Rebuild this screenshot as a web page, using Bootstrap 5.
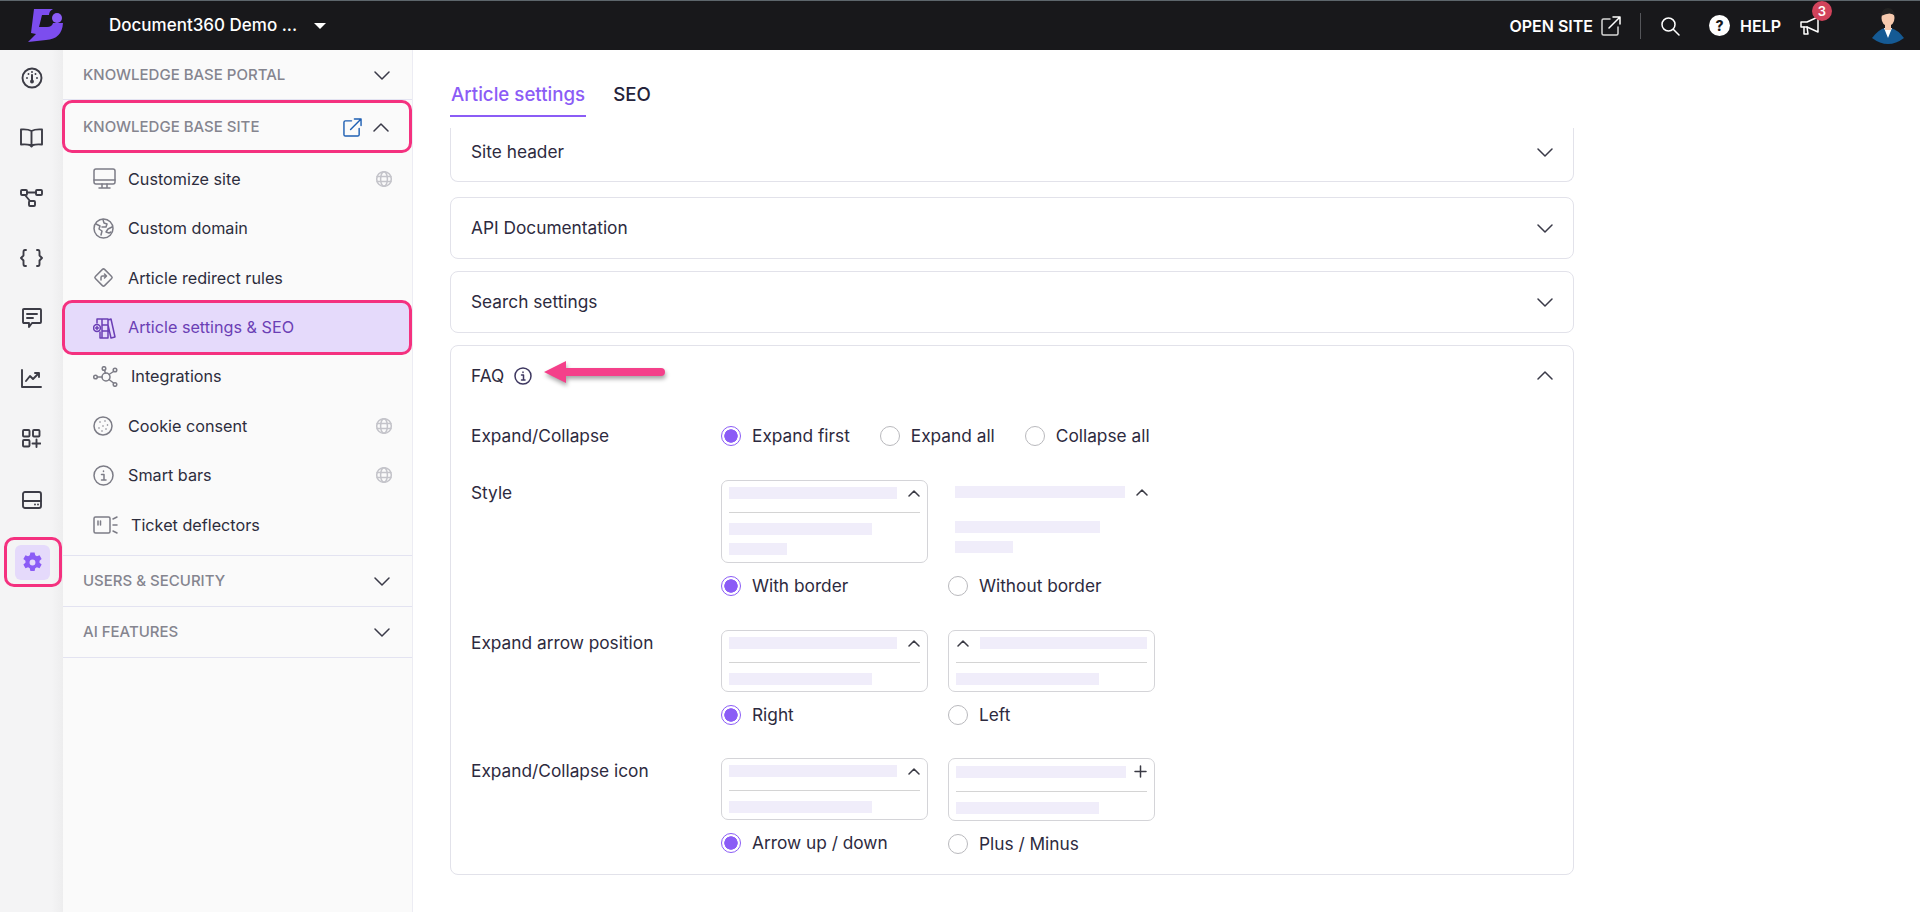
<!DOCTYPE html>
<html lang="en">
<head>
<meta charset="utf-8">
<title>Article settings &amp; SEO</title>
<link href="https://cdn.jsdelivr.net/npm/bootstrap@5.3.0/dist/css/bootstrap.min.css" rel="stylesheet">
<style>
html,body{height:100%;overflow:hidden}
body{font-family:Inter,"Liberation Sans",sans-serif;font-size:17.3px;color:#2d2a3e;background:#fff}
svg{display:block;flex:none}
.ic{fill:none;stroke:currentColor;stroke-width:1.5;stroke-linecap:round;stroke-linejoin:round}
.topbar{height:50px;background:#18181b;border-top:1px solid #5d666c;color:#fff;flex:none}
.brand-slot{width:109px;padding-left:28px}
.proj{font-size:17px;font-weight:500;width:192px;white-space:nowrap}
.caret-d{width:0;height:0;border-left:6px solid transparent;border-right:6px solid transparent;border-top:6px solid #fff;margin-left:13px}
.top-link{font-size:16px;font-weight:600;white-space:nowrap}
.top-sep{width:1px;height:26px;background:#55565a;margin:0 15px 0 19px}
.help-dot{width:21px;height:21px;border-radius:50%;background:#fff;color:#18181b;font-size:14px;font-weight:800;line-height:21px;text-align:center;margin:0 10px 0 29px}
.mega{position:relative;margin:0 50px 0 18px}
.mega-badge{position:absolute;top:-14px;left:13px;width:20px;height:20px;border-radius:50%;background:#d1435b;color:#fff;font-size:13px;font-weight:600;line-height:20px;text-align:center}
.avatar-slot{margin-right:15px}
.shell{height:862px}
.rail{width:63px;background:linear-gradient(90deg,#f4f4f5 82%,#ededee);color:#3c3c46;flex:none}
.rail .ic{stroke-width:1.900}
.rail-item{height:56px;margin-bottom:4px}
.rail-low{margin-top:2px}
.rail-active{width:58px;height:50px;margin:5px 0 7px 2px;border:3px solid #f4317f;border-radius:10px}
.gear-bg{width:35px;height:35px;border-radius:6px;background:#e5dafb;color:#8b5cf6}
.side{width:350px;background:#fafafa;border-right:1px solid #ececf3;flex:none}
.sec{height:51px;padding:2px 22px 0 20px;border-bottom:1px solid #e3e3f1;font-size:15px;font-weight:500;color:#85858f}
.sec-first{height:50px}
.sec-open{height:53px;margin-left:-1px;padding-left:18px;padding-right:20px;border:3px solid #f4317f;border-radius:10px}
.chev{color:#3a3a48}
.ext{color:#1e5fb3;margin-right:11px}
.sub-list{padding-top:1px;padding-bottom:5px;border-bottom:1px solid #e3e3f1}
.sub{height:49.5px;padding:0 20px 0 30px;color:#2d2d3d;font-size:16.2px}
.sub-ic{width:24px;margin-right:11px;color:#7c7c86;flex:none}
.sub-ic-w{width:27px}
.globe{margin-left:auto;color:#c4c4ca}
.sub-on{height:55px;margin:-3px 0 -3px -1px;padding-left:28px;padding-top:1px;border:3px solid #f4317f;border-radius:10px;background:#e5dafb;color:#6b3fb5}
.sub-on .sub-ic{color:#6b3fb5}
.stage{padding-left:37px;min-width:0}
.tabs-row{padding-top:34px;gap:26px}
.tab-lnk{display:block;font-size:18.7px;font-weight:500;line-height:22px;padding:0 1px 9px;color:#25233a;text-decoration:none;border-bottom:2px solid transparent}
.tab-on{color:#8b5cf6;border-bottom-color:#8b5cf6}
.pane{width:1124px;padding-top:11px}
.acc{border:1px solid #e2e2ea;border-radius:8px;margin-bottom:12px;background:#fff}
.acc-head{height:60px;padding:0 20px}
.acc-cut{border-top:0;border-top-left-radius:0;border-top-right-radius:0;margin-bottom:15px}
.acc-cut .acc-head{height:53px;padding-bottom:5px}
.faq-head{position:relative;height:59px}
.info{margin-left:10px;color:#3d3760}
.arrow-note{position:absolute;left:92px;top:14px;filter:drop-shadow(1px 3px 2px rgba(0,0,0,.35))}
.faq-body{padding:19px 20px 18px}
.opt-row{margin-bottom:32px}
.opt-row:last-child{margin-bottom:0}
.opt-row-tight{margin-bottom:31px}
.opt-name{width:250px;line-height:24px;padding-top:1px;flex:none;color:#2d2a3e}
.opt-name-first{padding-top:0}
.opts{gap:20px}
.opt-col{width:207px}
.radio-line{height:24px;margin-top:11px}
.radio-line-top{height:24px;margin-top:0}
.rad{width:20px;height:20px;margin:0 11px 0 0;flex:none;border:1px solid #b9b9bd;background-color:#fff}
.rad:checked{background-color:#fff;border-color:#8b5cf6;background-image:radial-gradient(circle,#8b5cf6 0 6.4px,#fff 7px)}
.rad:focus{box-shadow:none;border-color:#b9b9bd}
.rad-lbl{white-space:nowrap;color:#2d2a3e}
.first-gap{margin-right:30px}
.prev{border:1px solid #d4d4d8;border-radius:7px;padding:6px 7px;color:#3a3a44}
.prev-tall{padding-bottom:7px}
.prev-plain{border-color:transparent;padding:5px 6px 9px}
.bar1,.bar1w,.bar2,.bar2w,.bar3{height:12px;background:#f0edfa}
.bar1{width:168px}.bar1w{width:170px}.bar2{width:143px}.bar2w{width:145px}.bar3{width:58px;margin-top:8px}
.prev-line{height:1px;background:#d4d4d4;margin:13px 0 10px}
.prev-plain .prev-line{background:transparent;margin:12px 0 10px}
.chev-sm-l{margin:0 11px 0 1px}
</style>
</head>
<body class="d-flex flex-column">
<header class="topbar d-flex align-items-center">
  <div class="brand-slot">
    <svg width="36" height="34" viewBox="0 0 36 34"><path d="M6 0H25Q21 2 21 6H14L11 18H19Q24 18 25 14H35Q34 30 18 31L0 33 8 25 3 24Z" fill="#7c4dee"/><circle cx="29" cy="9" r="5" fill="#8b5cf6"/></svg>
  </div>
  <div class="proj">Document360 Demo ...</div>
  <span class="caret-d"></span>
  <div class="ms-auto d-flex align-items-center">
    <span class="top-link">OPEN SITE</span>
    <svg class="ic ms-2" style="color:#d6d6d6" width="20" height="20" viewBox="0 0 20 20"><path d="M9 3H2.500A1.500 1.500 0 0 0 1 4.500V17.500A1.500 1.500 0 0 0 2.500 19H15.500A1.500 1.500 0 0 0 17 17.500V11"/><path d="M8 12 19 1M12 1H19V8" stroke="#fff"/></svg>
    <span class="top-sep"></span>
    <svg class="ic ms-1" width="20" height="20" viewBox="0 0 20 20"><circle cx="8.500" cy="8.500" r="6.500"/><path d="M13.500 13.500 19 19"/></svg>
    <span class="help-dot">?</span>
    <span class="top-link">HELP</span>
    <span class="mega">
      <svg class="ic" width="22" height="22" viewBox="0 0 22 22" stroke-width="2"><path d="M2 7H8L19 2V17L8 12H2Z"/><path d="M5 12V19H9L8 12"/></svg>
      <span class="mega-badge">3</span>
    </span>
    <svg class="avatar-slot" width="34" height="36" viewBox="0 0 34 36"><path d="M1 30Q8 21 14 20H20Q27 22 33 30Q25 36 17 36T1 30Z" fill="#155a94"/><path d="M13 20 17 30 21 20Z" fill="#fff"/><ellipse cx="17" cy="10" rx="6.500" ry="8" fill="#f6c9ae"/><path d="M10 8Q11 0 17 0T24 8Q20 3 10 8Z" fill="#222"/><rect x="14" y="15" width="6" height="7" fill="#f6c9ae"/></svg>
  </div>
</header>
<div class="shell d-flex">
  <nav class="rail d-flex flex-column align-items-center">
    <div class="rail-item d-flex align-items-center justify-content-center"><svg class="ic" width="22" height="22" viewBox="0 0 22 22"><circle cx="11" cy="11" r="9.500"/><path d="M11 8V14" stroke-width="2"/><circle cx="11" cy="14.500" r="1" fill="currentColor"/><path d="M6 11v.01M7.500 7v.01M14.500 7v.01M16 11v.01M11 5v.01"/></svg></div>
    <div class="rail-item d-flex align-items-center justify-content-center"><svg class="ic" width="23" height="20" viewBox="0 0 23 20"><path d="M11.500 3Q8 1 1 1.500V16.500Q7 16 10 17L11.500 18.500 13 17Q16 16 22 16.500V1.500Q15 1 11.500 3ZM11.500 3V17"/></svg></div>
    <div class="rail-item d-flex align-items-center justify-content-center"><svg class="ic" width="23" height="18" viewBox="0 0 23 18"><rect x="1" y="1" width="6" height="5" rx="1"/><rect x="16" y="1" width="6" height="5" rx="1"/><rect x="9" y="12" width="6" height="5" rx="1"/><path d="M7 3.500H16M5 6 10 12"/></svg></div>
    <div class="rail-item d-flex align-items-center justify-content-center"><svg class="ic" width="23" height="18" viewBox="0 0 23 18"><path d="M6 1H5Q3.500 1 3.500 3V6.500L1 9 3.500 11.500V15Q3.500 17 5 17H6M17 1H18Q19.500 1 19.500 3V6.500L22 9 19.500 11.500V15Q19.500 17 18 17H17"/></svg></div>
    <div class="rail-item d-flex align-items-center justify-content-center"><svg class="ic" width="20" height="20" viewBox="0 0 20 20"><path d="M2 1H18Q19 1 19 2V14Q19 15 18 15H10L7 19V15H2Q1 15 1 14V2Q1 1 2 1Z"/><path d="M5 6H15M5 10H11"/></svg></div>
    <div class="rail-item d-flex align-items-center justify-content-center"><svg class="ic" width="21" height="19" viewBox="0 0 21 19"><path d="M1 1V18H20"/><path d="M5 12 9 7 12 10 18 4M14 4H18V8"/></svg></div>
    <div class="rail-item d-flex align-items-center justify-content-center"><svg class="ic" width="19" height="19" viewBox="0 0 19 19"><rect x="1" y="1" width="6.500" height="6.500" rx="1"/><rect x="11" y="1" width="6.500" height="6.500" rx="1"/><rect x="1" y="11" width="6.500" height="6.500" rx="1"/><path d="M14.500 10.500V18M10.500 14.500H18.500"/></svg></div>
    <div class="rail-item rail-low d-flex align-items-center justify-content-center"><svg class="ic" width="20" height="18" viewBox="0 0 20 18"><rect x="1" y="1" width="18" height="16" rx="2"/><path d="M1 10H19M13 13.500h.01M16 13.500h.01"/></svg></div>
    <div class="rail-active d-flex align-items-center justify-content-center">
      <div class="gear-bg d-flex align-items-center justify-content-center"><svg width="21" height="21" viewBox="0 0 20 20"><path fill="currentColor" fill-rule="evenodd" d="M8 .5h4l.6 2.600 1.600.9 2.500-.8 2 3.400-2 1.800v1.800l2 1.800-2 3.400-2.500-.8-1.600.9-.6 2.600H8l-.6-2.600-1.600-.9-2.500.8-2-3.400 2-1.800V8.400l-2-1.800 2-3.400 2.500.8 1.600-.9ZM10 7.200a2.800 2.800 0 1 0 0 5.600 2.800 2.800 0 0 0 0-5.600Z"/></svg></div>
    </div>
  </nav>
  <aside class="side d-flex flex-column">
    <div class="sec sec-first d-flex align-items-center justify-content-between"><span>KNOWLEDGE BASE PORTAL</span><svg class="ic chev" width="16" height="9" viewBox="0 0 16 9"><path d="M1 1 8 8 15 1"/></svg></div>
    <div class="sec sec-open d-flex align-items-center"><span class="me-auto">KNOWLEDGE BASE SITE</span>
      <svg class="ic ext" width="19" height="19" viewBox="0 0 20 20" stroke-width="1.700"><path d="M9 3H2.500A1.500 1.500 0 0 0 1 4.500V17.500A1.500 1.500 0 0 0 2.500 19H15.500A1.500 1.500 0 0 0 17 17.500V11M8 12 19 1M12 1H19V8"/></svg>
      <svg class="ic chev" width="16" height="9" viewBox="0 0 16 9"><path d="M1 8 8 1 15 8"/></svg></div>
    <div class="sub-list d-flex flex-column">
      <div class="sub d-flex align-items-center"><span class="sub-ic"><svg class="ic" width="23" height="21" viewBox="0 0 23 21"><rect x="1" y="1" width="21" height="15" rx="2"/><path d="M1 12H22M9 16V19M14 16V19M6 20H17"/></svg></span>Customize site<svg class="ic globe" width="16" height="16" viewBox="0 0 16 16" stroke-width="1.200"><circle cx="8" cy="8" r="7.300"/><ellipse cx="8" cy="8" rx="3.400" ry="7.300"/><path d="M1 5.500H15M1 10.500H15"/></svg></div>
      <div class="sub d-flex align-items-center"><span class="sub-ic"><svg class="ic" width="21" height="21" viewBox="0 0 21 21" stroke-width="1.300"><circle cx="10.500" cy="10.500" r="9.500"/><path d="M3 6 7 8 6 11 9 13 8 17M10 1.500 11 5 14 6 13 9 9 9M19 9 15 11 13 14 16 15 18 14"/></svg></span>Custom domain</div>
      <div class="sub d-flex align-items-center"><span class="sub-ic"><svg class="ic" width="21" height="21" viewBox="0 0 21 21" stroke-width="1.300"><rect x="4" y="4" width="13" height="13" rx="1.500" transform="rotate(45 10.500 10.500)"/><path d="M8 13V10.500Q8 9 9.500 9H13M11.500 7 13.500 9 11.500 11"/></svg></span>Article redirect rules</div>
      <div class="sub sub-on d-flex align-items-center"><span class="sub-ic"><svg class="ic" width="23" height="22" viewBox="0 0 23 22" stroke-width="1.300"><path d="M4 6V2H15V21H7V15M9 2V21M9 8H15M9 14H15M15 3 18 2 22 20 18 21 15 8"/><circle cx="4" cy="11" r="3.400"/><path d="M4 9.500V12.500M2.500 11H5.500"/></svg></span>Article settings &amp; SEO</div>
      <div class="sub d-flex align-items-center"><span class="sub-ic sub-ic-w"><svg class="ic" width="25" height="21" viewBox="0 0 25 21" stroke-width="1.300"><circle cx="13" cy="11" r="4"/><circle cx="2.500" cy="11" r="1.800"/><circle cx="11" cy="2.500" r="1.800"/><circle cx="22" cy="4" r="1.800"/><circle cx="22" cy="18.500" r="1.800"/><path d="M4.500 11H9M11.500 4.500 12.500 7M20.500 5.500 16 8.500M20.500 17 16 13.500"/></svg></span>Integrations</div>
      <div class="sub d-flex align-items-center"><span class="sub-ic"><svg class="ic" width="20" height="20" viewBox="0 0 20 20" stroke-width="1.300"><circle cx="10" cy="10" r="9"/><path d="M7 6v.01M12 5v.01M14.500 9v.01M10 10v.01M6 12v.01M13 13v.01M9 15v.01" stroke-width="1.600"/></svg></span>Cookie consent<svg class="ic globe" width="16" height="16" viewBox="0 0 16 16" stroke-width="1.200"><circle cx="8" cy="8" r="7.300"/><ellipse cx="8" cy="8" rx="3.400" ry="7.300"/><path d="M1 5.500H15M1 10.500H15"/></svg></div>
      <div class="sub d-flex align-items-center"><span class="sub-ic"><svg class="ic" width="21" height="21" viewBox="0 0 21 21" stroke-width="1.300"><circle cx="10.500" cy="10.500" r="9.500"/><path d="M10.500 6v.5M8.500 9.500H11V15M8.500 15H13"/></svg></span>Smart bars<svg class="ic globe" width="16" height="16" viewBox="0 0 16 16" stroke-width="1.200"><circle cx="8" cy="8" r="7.300"/><ellipse cx="8" cy="8" rx="3.400" ry="7.300"/><path d="M1 5.500H15M1 10.500H15"/></svg></div>
      <div class="sub d-flex align-items-center"><span class="sub-ic sub-ic-w"><svg class="ic" width="25" height="18" viewBox="0 0 25 18" stroke-width="1.200"><rect x="1" y="1" width="16" height="16" rx="1.500"/><path d="M5 5V9M7.500 5V9M20 3 24 1M20 9H24M20 15 24 17"/></svg></span>Ticket deflectors</div>
    </div>
    <div class="sec d-flex align-items-center justify-content-between"><span>USERS &amp; SECURITY</span><svg class="ic chev" width="16" height="9" viewBox="0 0 16 9"><path d="M1 1 8 8 15 1"/></svg></div>
    <div class="sec d-flex align-items-center justify-content-between"><span>AI FEATURES</span><svg class="ic chev" width="16" height="9" viewBox="0 0 16 9"><path d="M1 1 8 8 15 1"/></svg></div>
  </aside>
  <main class="stage flex-grow-1">
    <div class="tabs-row d-flex">
      <a class="tab-lnk tab-on" href="#">Article settings</a>
      <a class="tab-lnk" href="#">SEO</a>
    </div>
    <div class="pane">
      <div class="acc acc-cut"><div class="acc-head d-flex align-items-center justify-content-between"><span>Site header</span><svg class="ic chev" width="16" height="9" viewBox="0 0 16 9"><path d="M1 1 8 8 15 1"/></svg></div></div>
      <div class="acc"><div class="acc-head d-flex align-items-center justify-content-between"><span>API Documentation</span><svg class="ic chev" width="16" height="9" viewBox="0 0 16 9"><path d="M1 1 8 8 15 1"/></svg></div></div>
      <div class="acc"><div class="acc-head d-flex align-items-center justify-content-between"><span>Search settings</span><svg class="ic chev" width="16" height="9" viewBox="0 0 16 9"><path d="M1 1 8 8 15 1"/></svg></div></div>
      <div class="acc mb-0">
        <div class="acc-head faq-head d-flex align-items-center">
          <span>FAQ</span>
          <svg class="ic info" width="18" height="18" viewBox="0 0 18 18" stroke-width="1.100"><circle cx="9" cy="9" r="8"/><path d="M9 5v.5M7.500 8H9.500V13M7.500 13H11"/></svg>
          <svg class="arrow-note" width="122" height="24" viewBox="0 0 122 24"><path d="M1 12 23 1V8H118A4 4 0 0 1 118 16H23V23Z" fill="#f4408a"/></svg>
          <svg class="ic chev ms-auto" width="16" height="9" viewBox="0 0 16 9"><path d="M1 8 8 1 15 8"/></svg>
        </div>
        <div class="faq-body">
          <div class="opt-row d-flex">
            <div class="opt-name opt-name-first">Expand/Collapse</div>
            <div class="radio-line-top d-flex align-items-center">
              <input class="form-check-input rad" type="radio" name="a" checked><span class="rad-lbl first-gap">Expand first</span>
              <input class="form-check-input rad" type="radio" name="a"><span class="rad-lbl first-gap">Expand all</span>
              <input class="form-check-input rad" type="radio" name="a"><span class="rad-lbl">Collapse all</span>
            </div>
          </div>
          <div class="opt-row d-flex">
            <div class="opt-name">Style</div>
            <div class="opts d-flex">
              <div class="opt-col">
                <div class="prev prev-tall">
                  <div class="d-flex align-items-center justify-content-between"><div class="bar1"></div><svg class="ic" width="12" height="8" viewBox="0 0 12 8" stroke-width="1.700"><path d="M1 7 6 2 11 7"/></svg></div>
                  <div class="prev-line"></div><div class="bar2"></div><div class="bar3"></div>
                </div>
                <div class="radio-line d-flex align-items-center"><input class="form-check-input rad" type="radio" name="b" checked><span class="rad-lbl">With border</span></div>
              </div>
              <div class="opt-col">
                <div class="prev prev-plain">
                  <div class="d-flex align-items-center justify-content-between"><div class="bar1w"></div><svg class="ic" width="12" height="8" viewBox="0 0 12 8" stroke-width="1.700"><path d="M1 7 6 2 11 7"/></svg></div>
                  <div class="prev-line"></div><div class="bar2w"></div><div class="bar3"></div>
                </div>
                <div class="radio-line d-flex align-items-center"><input class="form-check-input rad" type="radio" name="b"><span class="rad-lbl">Without border</span></div>
              </div>
            </div>
          </div>
          <div class="opt-row opt-row-tight d-flex">
            <div class="opt-name">Expand arrow position</div>
            <div class="opts d-flex">
              <div class="opt-col">
                <div class="prev">
                  <div class="d-flex align-items-center justify-content-between"><div class="bar1"></div><svg class="ic" width="12" height="8" viewBox="0 0 12 8" stroke-width="1.700"><path d="M1 7 6 2 11 7"/></svg></div>
                  <div class="prev-line"></div><div class="bar2"></div>
                </div>
                <div class="radio-line d-flex align-items-center"><input class="form-check-input rad" type="radio" name="c" checked><span class="rad-lbl">Right</span></div>
              </div>
              <div class="opt-col">
                <div class="prev">
                  <div class="d-flex align-items-center"><svg class="ic chev-sm-l" width="12" height="8" viewBox="0 0 12 8" stroke-width="1.700"><path d="M1 7 6 2 11 7"/></svg><div class="bar1"></div></div>
                  <div class="prev-line"></div><div class="bar2"></div>
                </div>
                <div class="radio-line d-flex align-items-center"><input class="form-check-input rad" type="radio" name="c"><span class="rad-lbl">Left</span></div>
              </div>
            </div>
          </div>
          <div class="opt-row d-flex">
            <div class="opt-name">Expand/Collapse icon</div>
            <div class="opts d-flex">
              <div class="opt-col">
                <div class="prev">
                  <div class="d-flex align-items-center justify-content-between"><div class="bar1"></div><svg class="ic" width="12" height="8" viewBox="0 0 12 8" stroke-width="1.700"><path d="M1 7 6 2 11 7"/></svg></div>
                  <div class="prev-line"></div><div class="bar2"></div>
                </div>
                <div class="radio-line d-flex align-items-center"><input class="form-check-input rad" type="radio" name="d" checked><span class="rad-lbl">Arrow up / down</span></div>
              </div>
              <div class="opt-col">
                <div class="prev">
                  <div class="d-flex align-items-center justify-content-between"><div class="bar1w"></div><svg class="ic" width="13" height="13" viewBox="0 0 13 13" stroke-width="1.700"><path d="M6.500 1V12M1 6.500H12"/></svg></div>
                  <div class="prev-line"></div><div class="bar2"></div>
                </div>
                <div class="radio-line d-flex align-items-center"><input class="form-check-input rad" type="radio" name="d"><span class="rad-lbl">Plus / Minus</span></div>
              </div>
            </div>
          </div>
        </div>
      </div>
    </div>
  </main>
</div>
<script src="https://cdn.jsdelivr.net/npm/bootstrap@5.3.0/dist/js/bootstrap.bundle.min.js"></script>
</body>
</html>
